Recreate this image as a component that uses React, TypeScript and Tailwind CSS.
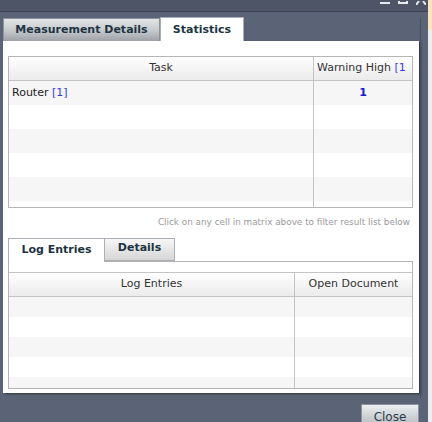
import React from 'react';

const FONT = { fontFamily: '"DejaVu Sans", Verdana, sans-serif' };

function TopRows() {
  const rows = [0, 1, 2, 3, 4];
  return (
    <>
      {rows.map(i => (
        <div key={i} className={`flex h-[24px] ${i % 2 === 0 ? 'bg-[#f6f6f6]' : 'bg-white'}`}>
          <div className="w-[305px] flex items-center pl-[3px] text-[11px] text-[#222] border-r border-[#c4c4c4]">
            {i === 0 && (
              <span>
                Router <span className="text-[#3a3adf]">[1]</span>
              </span>
            )}
          </div>
          <div className="flex-1 flex items-center justify-center text-[11px] font-bold text-[#1a1ad0]">
            {i === 0 && '1'}
          </div>
        </div>
      ))}
    </>
  );
}

function LogRows() {
  const rows = [0, 1, 2, 3];
  return (
    <>
      {rows.map(i => (
        <div key={i} className={`flex h-[20px] ${i % 2 === 0 ? 'bg-[#f6f6f6]' : 'bg-white'}`}>
          <div className="w-[286px] border-r border-[#c4c4c4]" />
          <div className="flex-1" />
        </div>
      ))}
      <div className="flex h-[11px] bg-[#f6f6f6]">
        <div className="w-[286px] border-r border-[#c4c4c4]" />
        <div className="flex-1" />
      </div>
    </>
  );
}

export default function App() {
  return (
    <div className="relative w-[432px] h-[422px] overflow-hidden bg-[#5b6477]" style={FONT}>
      {/* title bar strip */}
      <div className="h-[12px] bg-[#4e5567] border-b border-[#3d4353]" />

      {/* window controls, cut off at top */}
      <div className="absolute top-0 right-[6px] flex items-end gap-[8px] h-[4px]">
        <div className="w-[10px] h-[2px] bg-[#e8eaee] mt-[1px]" />
        <div className="w-[10px] h-[3px] border-x-2 border-b-2 border-[#e8eaee]" />
        <div className="w-[10px] h-[3px] leading-[0px]">
          <svg width="10" height="4" viewBox="0 0 10 4">
            <path d="M0 4 L3 0 M10 4 L7 0" stroke="#e8eaee" strokeWidth="2" />
          </svg>
        </div>
      </div>

      {/* light strip at right edge (content behind) */}
      <div className="absolute top-0 right-0 w-[4px] h-full bg-[#eeeeee]">
        <div className="h-[30px] bg-[#fde6bf]" />
      </div>
      {/* dark vertical line */}
      <div className="absolute top-[18px] left-[420px] w-[1px] h-[380px] bg-[#48505f]" />

      <div className="pl-[3px] pt-[5px] w-[419px]">
        {/* tabs */}
        <div className="flex h-[24px] items-end">
          <div className="w-[157px] h-[23px] flex items-center justify-center text-[11px] font-bold text-[#1d3443] bg-gradient-to-b from-[#e2e4e6] via-[#c8cbce] to-[#9ea2a7] border border-[#8c9298] border-b-0">
            Measurement Details
          </div>
          <div className="w-[84px] h-[24px] flex items-center justify-center text-[11px] font-bold text-[#1d3443] bg-white border border-[#aab0b6] border-b-0 pt-[1px]">
            Statistics
          </div>
        </div>

        {/* panel */}
        <div className="w-[416px] h-[352px] bg-white px-[5px] pt-[15px] shadow-[2px_1px_2px_rgba(0,0,0,0.45)]">
          <div className="w-[405px] border border-[#b5b5b5]">
            <div className="flex h-[24px] border-b border-[#c4c4c4] bg-gradient-to-b from-white to-[#ebebeb] text-[11px] text-[#333]">
              <div className="w-[305px] flex items-center justify-center border-r border-[#c4c4c4]">Task</div>
              <div className="flex-1 flex items-center pl-[3px] overflow-hidden whitespace-nowrap">
                Warning High&nbsp;<span className="text-[#3a3adf]">[1</span>
              </div>
            </div>
            <TopRows />
            <div className="flex h-[6px]">
              <div className="w-[305px] border-r border-[#c4c4c4]" />
            </div>
          </div>

          <div className="mt-[8px] h-[12px] leading-[12px] text-right pr-[4px] text-[8.85px] text-[#9a9a9a] whitespace-nowrap">
            Click on any cell in matrix above to filter result list below
          </div>

          {/* bottom tabs */}
          <div className="mt-[9px] flex h-[24px] items-end">
            <div className="w-[97px] h-[24px] flex items-end justify-center pb-[4px] text-[11px] font-bold text-[#1d3443] bg-white border border-[#aab0b6] border-b-0 relative top-[1px]">
              Log Entries
            </div>
            <div className="w-[70px] h-[23px] flex items-center justify-center pb-[2px] text-[11px] font-bold text-[#1d3443] bg-gradient-to-b from-[#f7f7f7] to-[#d6d6d6] border border-[#a8adb2] border-l-0">
              Details
            </div>
          </div>

          <div className="w-[405px] h-[128px] border border-[#b5b5b5] pt-[10px]">
            <div className="flex h-[25px] border-y border-[#c4c4c4] bg-gradient-to-b from-white to-[#ebebeb] text-[11px] text-[#333]">
              <div className="w-[286px] flex items-center justify-center border-r border-[#c4c4c4]">Log Entries</div>
              <div className="flex-1 flex items-center justify-center">Open Document</div>
            </div>
            <LogRows />
          </div>
        </div>

        <div className="flex justify-end mt-[11px]">
          <div className="w-[58px] h-[22px] flex items-start justify-center pt-[3px] text-[12px] text-[#2c3e4c] bg-gradient-to-b from-[#eceeef] to-[#b9bdc1] border border-[#8b929b]">
            Close
          </div>
        </div>
      </div>
    </div>
  );
}
